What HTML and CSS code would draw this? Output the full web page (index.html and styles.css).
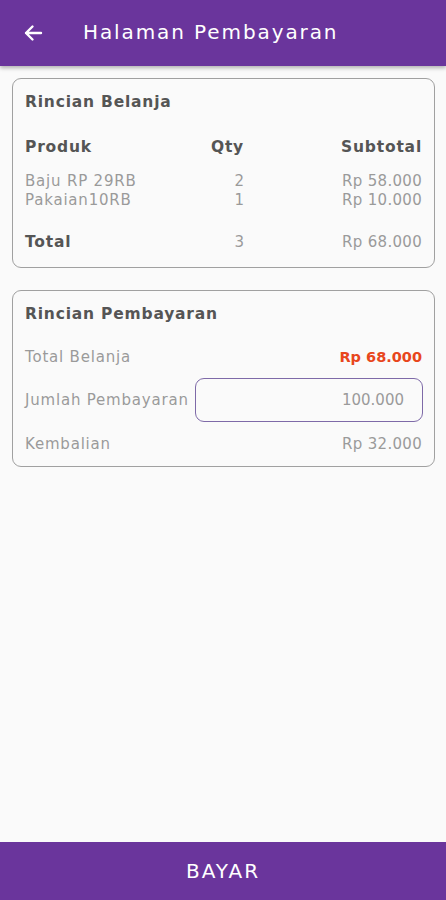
FILE: index.html
```html
<!DOCTYPE html>
<html>
<head>
<meta charset="utf-8">
<link rel="stylesheet" href="styles.css">
</head>
<body>
<div class="app">
  <header class="appbar">
    <svg class="back" width="20" height="20" viewBox="0 0 20 20"><path d="M18 10H3M9.5 3.5L3 10l6.5 6.5" fill="none" stroke="#fff" stroke-width="2.4" stroke-linecap="round" stroke-linejoin="round"/></svg>
    <span class="title">Halaman Pembayaran</span>
  </header>
  <main class="content">
    <section class="card card-belanja">
      <h2 class="card-title">Rincian Belanja</h2>
      <div class="table">
        <div class="trow thead"><span>Produk</span><span class="qty">Qty</span><span class="sub">Subtotal</span></div>
        <div class="items">
          <div class="trow item"><span class="txt">Baju RP 29RB</span><span class="qty">2</span><span class="sub num">Rp 58.000</span></div>
          <div class="trow item"><span class="txt">Pakaian10RB</span><span class="qty">1</span><span class="sub num">Rp 10.000</span></div>
        </div>
        <div class="trow total"><span class="bold">Total</span><span class="qty">3</span><span class="sub num">Rp 68.000</span></div>
      </div>
    </section>
    <section class="card card-bayar">
      <h2 class="card-title">Rincian Pembayaran</h2>
      <div class="prow"><span class="txt">Total Belanja</span><span class="red">Rp 68.000</span></div>
      <div class="prow prow-input"><span class="txt">Jumlah Pembayaran</span><div class="input">100.000</div></div>
      <div class="prow"><span class="txt">Kembalian</span><span class="num">Rp 32.000</span></div>
    </section>
  </main>
  <footer class="pay">BAYAR</footer>
</div>
</body>
</html>
```
FILE: styles.css
```css
* { box-sizing: border-box; }
html, body { margin: 0; padding: 0; }
body {
  background: #fafafa;
  font-family: "DejaVu Sans", "Open Sans", sans-serif;
  width: 446px;
  height: 900px;
  overflow: hidden;
}
.app { display: flex; flex-direction: column; height: 900px; }
.appbar {
  height: 66px;
  background: #6a359c;
  display: flex;
  align-items: center;
  padding-left: 23px;
  box-shadow: 0 2px 4px rgba(0,0,0,0.3);
  position: relative;
  z-index: 1;
}
.back { margin-top: -1px; }
.title {
  color: #fff;
  font-size: 20px;
  margin-left: 40px;
  letter-spacing: 1.9px;
  margin-top: -2px;
}
.content { flex: 1; padding: 12px 11px 0 12px; display: flex; flex-direction: column; gap: 22px; }
.card {
  border: 1.3px solid #a0a0a0;
  border-radius: 9px;
  background: #fafafa;
  padding: 12px 12px 0 12px;
}
.card-title {
  margin: 0;
  font-size: 15.5px;
  font-weight: bold;
  color: #555;
  line-height: 22px;
  letter-spacing: 0.8px;
}
.card-belanja { height: 190px; }
.table { margin-top: 23px; }
.trow { display: grid; grid-template-columns: 150px 69px 1fr; align-items: center; }
.trow .qty { text-align: right; }
.trow .sub { text-align: right; }
.thead { font-weight: bold; font-size: 15.5px; color: #555; line-height: 22px; margin-bottom: 14px; letter-spacing: 0.8px; }
.item { font-size: 15px; color: #9a9a9a; line-height: 19px; }
.txt { letter-spacing: 0.8px; }
.num { letter-spacing: 0.3px; }
.total { margin-top: 21px; font-size: 15px; color: #9a9a9a; line-height: 22px; }
.total .bold { font-weight: bold; font-size: 15.5px; color: #555; letter-spacing: 0.8px; }
.card-bayar { height: 177px; padding-top: 12px; }
.card-bayar .card-title { margin-bottom: 21px; }
.prow {
  display: flex; justify-content: space-between; align-items: center;
  font-size: 15px; color: #9a9a9a; height: 22px; margin-bottom: 21px;
}
.prow-input { height: 44px; margin-bottom: 11px; margin-top: -11px; }
.prow .red { color: #e8461c; font-weight: bold; font-size: 14.5px; }
.input {
  width: 228px; height: 44px;
  border: 1.3px solid #7e6aa8;
  border-radius: 9px;
  display: flex; align-items: center; justify-content: flex-end;
  padding-right: 18px;
  color: #9a9a9a;
  font-size: 15px;
  margin-right: -1px;
}
.pay {
  height: 58px;
  background: #6a359c;
  color: #fff;
  display: flex; align-items: center; justify-content: center;
  font-size: 20px;
  letter-spacing: 2px;
}
```
